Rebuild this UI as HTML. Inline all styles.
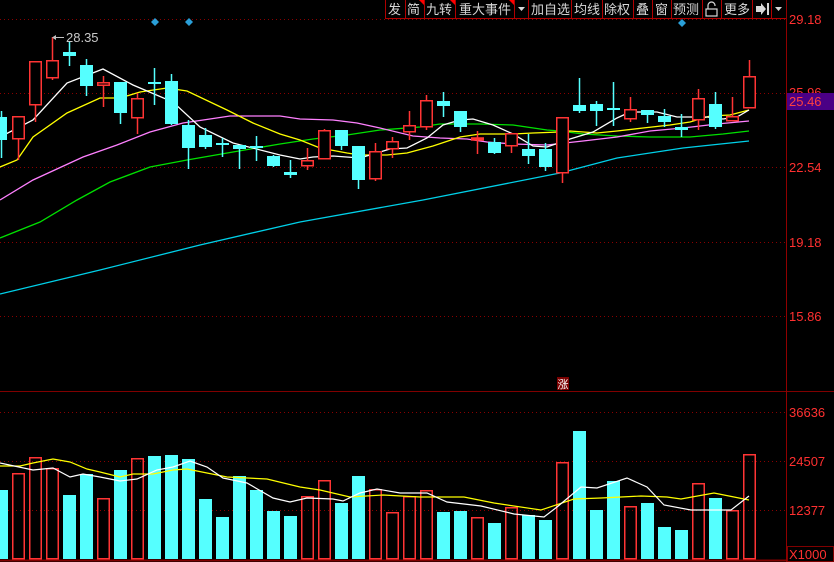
<!DOCTYPE html>
<html><head><meta charset="utf-8"><style>
html,body{margin:0;padding:0;background:#000;width:834px;height:562px;overflow:hidden}
svg{display:block}
text{font-family:"Liberation Sans","Noto Sans CJK SC",sans-serif}
</style></head><body>
<svg width="834" height="562" viewBox="0 0 834 562" xmlns="http://www.w3.org/2000/svg">
<rect width="834" height="562" fill="#000"/>
<!-- grid -->
<g stroke="#8a0000" stroke-width="1" stroke-dasharray="1,3">
<line x1="0" y1="19.5" x2="786" y2="19.5"/>
<line x1="0" y1="93.5" x2="786" y2="93.5"/>
<line x1="0" y1="167.5" x2="786" y2="167.5"/>
<line x1="0" y1="242.5" x2="786" y2="242.5"/>
<line x1="0" y1="316.5" x2="786" y2="316.5"/>
<line x1="0" y1="412.5" x2="786" y2="412.5"/>
<line x1="0" y1="461.5" x2="786" y2="461.5"/>
<line x1="0" y1="510.5" x2="786" y2="510.5"/>
</g>
<line x1="0" y1="391.5" x2="834" y2="391.5" stroke="#800000"/>
<line x1="0" y1="560.5" x2="786" y2="560.5" stroke="#800000" stroke-width="2"/>
<line x1="786.5" y1="0" x2="786.5" y2="562" stroke="#900000"/>

<!-- MA lines price -->
<g fill="none" stroke-width="1.3">
<polyline stroke="#00d0e8" points="0,294 100,270 200,245 300,222 423,200 560,173 617,158 683,148 749,141"/>
<polyline stroke="#00e000" points="0,238 40,222 77,200 110,182 150,167 187,160 233,152 280,144 313,139 347,135 380,130 420,127 440,124 480,124 513,125 547,130 560,131 583,134 617,136 650,137 690,137 723,134 749,131"/>
<polyline stroke="#ff80ff" points="0,200 33,180 83,157 117,145 150,132 183,123 230,116 280,116 300,119 333,120 357,123 380,128 413,136 440,138 467,139 487,142 513,144 547,145 583,141 617,137 650,131 683,128 717,124 749,121"/>
<polyline stroke="#ffff00" points="0,167 17,160 33,137 67,113 100,98 120,98 140,92 167,88 187,91 227,110 253,123 280,134 300,140 320,148 347,153 360,155 387,155 407,153 433,146 460,137 480,134 513,134 533,133 560,132 570,131 597,133 617,131 643,128 670,125 690,122 710,116 730,115 749,110"/>
<polyline stroke="#ffffff" points="0,137 33,120 67,83 103,69 133,85 173,102 200,127 233,143 280,155 300,159 313,157 333,156 360,158 390,149 407,148 427,138 443,125 460,120 473,119 493,125 513,134 533,146 547,147 570,139 593,132 617,118 630,112 657,112 677,117 707,117 723,119 737,117 749,110"/>
</g>

<!-- candles -->
<g stroke-width="1.5">
<g stroke="#55ffff" fill="#55ffff">
<line x1="1.5" y1="111" x2="1.5" y2="158"/><rect x="-5" y="117" width="12" height="23" stroke="none"/>
<line x1="69.5" y1="42" x2="69.5" y2="66"/><rect x="63" y="52" width="13" height="4" stroke="none"/>
<line x1="86.5" y1="59" x2="86.5" y2="96"/><rect x="80" y="65" width="13" height="21" stroke="none"/>
<line x1="120.5" y1="82" x2="120.5" y2="124"/><rect x="114" y="82" width="13" height="31" stroke="none"/>
<line x1="154.5" y1="68" x2="154.5" y2="105"/><rect x="148" y="82" width="13" height="2" stroke="none"/>
<line x1="171.5" y1="74" x2="171.5" y2="125"/><rect x="165" y="81" width="13" height="43" stroke="none"/>
<line x1="188.5" y1="120" x2="188.5" y2="169"/><rect x="182" y="125" width="13" height="23" stroke="none"/>
<line x1="205.5" y1="128" x2="205.5" y2="149"/><rect x="199" y="135" width="13" height="12" stroke="none"/>
<line x1="222.5" y1="138" x2="222.5" y2="157"/><rect x="216" y="143" width="13" height="2" stroke="none"/>
<line x1="239.5" y1="145" x2="239.5" y2="169"/><rect x="233" y="145" width="13" height="4" stroke="none"/>
<line x1="256.5" y1="136" x2="256.5" y2="161"/><rect x="250" y="146" width="13" height="2" stroke="none"/>
<line x1="273.5" y1="155" x2="273.5" y2="167"/><rect x="267" y="156" width="13" height="10" stroke="none"/>
<line x1="290.5" y1="160" x2="290.5" y2="178"/><rect x="284" y="172" width="13" height="3" stroke="none"/>
<line x1="341.5" y1="130" x2="341.5" y2="150"/><rect x="335" y="130" width="13" height="16" stroke="none"/>
<line x1="358.5" y1="146" x2="358.5" y2="189"/><rect x="352" y="146" width="13" height="34" stroke="none"/>
<line x1="443.5" y1="92" x2="443.5" y2="117"/><rect x="437" y="101" width="13" height="5" stroke="none"/>
<line x1="460.5" y1="111" x2="460.5" y2="132"/><rect x="454" y="111" width="13" height="16" stroke="none"/>
<line x1="494.5" y1="138" x2="494.5" y2="154"/><rect x="488" y="142" width="13" height="11" stroke="none"/>
<line x1="528.5" y1="134" x2="528.5" y2="164"/><rect x="522" y="149" width="13" height="7" stroke="none"/>
<line x1="545.5" y1="143" x2="545.5" y2="171"/><rect x="539" y="149" width="13" height="18" stroke="none"/>
<line x1="579.5" y1="78" x2="579.5" y2="113"/><rect x="573" y="105" width="13" height="6" stroke="none"/>
<line x1="596.5" y1="101" x2="596.5" y2="126"/><rect x="590" y="104" width="13" height="7" stroke="none"/>
<line x1="613.5" y1="82" x2="613.5" y2="126"/><rect x="607" y="108" width="13" height="2" stroke="none"/>
<line x1="647.5" y1="110" x2="647.5" y2="123"/><rect x="641" y="110" width="13" height="5" stroke="none"/>
<line x1="664.5" y1="109" x2="664.5" y2="127"/><rect x="658" y="116" width="13" height="6" stroke="none"/>
<line x1="681.5" y1="114" x2="681.5" y2="137"/><rect x="675" y="127" width="13" height="3" stroke="none"/>
<line x1="715.5" y1="92" x2="715.5" y2="129"/><rect x="709" y="104" width="13" height="23" stroke="none"/>
</g>
<g stroke="#ff3434" fill="#000">
<line x1="18.5" y1="116" x2="18.5" y2="160"/><rect x="12.75" y="116.75" width="11.5" height="22"/>
<line x1="35.5" y1="61" x2="35.5" y2="122"/><rect x="29.75" y="61.75" width="11.5" height="43"/>
<line x1="52.5" y1="37" x2="52.5" y2="80"/><rect x="46.75" y="60.75" width="11.5" height="17"/>
<line x1="103.5" y1="76" x2="103.5" y2="107"/><rect x="97.75" y="82.75" width="11.5" height="2.5"/>
<line x1="137.5" y1="93" x2="137.5" y2="134"/><rect x="131.75" y="98.75" width="11.5" height="19"/>
<line x1="307.5" y1="148" x2="307.5" y2="170"/><rect x="301.75" y="160.75" width="11.5" height="5"/>
<line x1="324.5" y1="129" x2="324.5" y2="159"/><rect x="318.75" y="130.75" width="11.5" height="28"/>
<line x1="375.5" y1="143" x2="375.5" y2="181"/><rect x="369.75" y="151.75" width="11.5" height="27"/>
<line x1="392.5" y1="137" x2="392.5" y2="158"/><rect x="386.75" y="141.75" width="11.5" height="7"/>
<line x1="409.5" y1="111" x2="409.5" y2="140"/><rect x="403.75" y="125.75" width="11.5" height="6"/>
<line x1="426.5" y1="95" x2="426.5" y2="130"/><rect x="420.75" y="100.75" width="11.5" height="26"/>
<line x1="477.5" y1="131" x2="477.5" y2="154"/><rect x="471.75" y="138" width="11.5" height="2" fill="#ff3434"/>
<line x1="511.5" y1="133" x2="511.5" y2="153"/><rect x="505.75" y="133.75" width="11.5" height="12"/>
<line x1="562.5" y1="117" x2="562.5" y2="183"/><rect x="556.75" y="117.75" width="11.5" height="55"/>
<line x1="630.5" y1="97" x2="630.5" y2="122"/><rect x="624.75" y="109.75" width="11.5" height="9"/>
<line x1="698.5" y1="89" x2="698.5" y2="130"/><rect x="692.75" y="98.75" width="11.5" height="21"/>
<line x1="732.5" y1="97" x2="732.5" y2="121"/><rect x="726.75" y="116.75" width="11.5" height="4"/>
<line x1="749.5" y1="60" x2="749.5" y2="108"/><rect x="743.75" y="76.75" width="11.5" height="31"/>
</g>
</g>

<!-- 28.35 -->
<line x1="55" y1="37.5" x2="64" y2="37.5" stroke="#c0c0c0"/>
<path d="M52,37.5 L56,35 L56,40 Z" fill="#c0c0c0"/>
<text x="66" y="42" font-size="13" fill="#c8c8c8">28.35</text>

<!-- diamonds -->
<g fill="#2a9fd8">
<path d="M155,18 L159,22 L155,26 L151,22Z"/>
<path d="M189,18 L193,22 L189,26 L185,22Z"/>
<path d="M682,19 L686,23 L682,27 L678,23Z"/>
</g>

<!-- toolbar -->
<g>
<rect x="385" y="0" width="401" height="19" fill="#000"/>
<line x1="385" y1="18.5" x2="786" y2="18.5" stroke="#b00000"/>
<g stroke="#b00000">
<line x1="385.5" y1="0" x2="385.5" y2="19"/>
<line x1="405.5" y1="0" x2="405.5" y2="19"/>
<line x1="424.5" y1="0" x2="424.5" y2="19"/>
<line x1="455.5" y1="0" x2="455.5" y2="19"/>
<line x1="514.5" y1="0" x2="514.5" y2="19"/>
<line x1="528.5" y1="0" x2="528.5" y2="19"/>
<line x1="571.5" y1="0" x2="571.5" y2="19"/>
<line x1="602.5" y1="0" x2="602.5" y2="19"/>
<line x1="633.5" y1="0" x2="633.5" y2="19"/>
<line x1="652.5" y1="0" x2="652.5" y2="19"/>
<line x1="671.5" y1="0" x2="671.5" y2="19"/>
<line x1="702.5" y1="0" x2="702.5" y2="19"/>
<line x1="721.5" y1="0" x2="721.5" y2="19"/>
<line x1="752.5" y1="0" x2="752.5" y2="19"/>
<line x1="771.5" y1="0" x2="771.5" y2="19"/>
</g>
<g fill="#ff0000">
<path d="M419,0 L424,0 L424,5Z"/>
<path d="M450,0 L455,0 L455,5Z"/>
<path d="M509,0 L514,0 L514,5Z"/>
</g>
<g font-size="13" fill="#d8d8d8">
<text x="388" y="14">发</text>
<text x="407" y="14">简</text>
<text x="426" y="14">九转</text>
<text x="459" y="14">重大事件</text>
<text x="531" y="14">加自选</text>
<text x="574" y="14">均线</text>
<text x="604" y="14">除权</text>
<text x="636" y="14">叠</text>
<text x="655" y="14">窗</text>
<text x="673" y="14">预测</text>
<text x="724" y="14">更多</text>
</g>
<path d="M518,7 L525,7 L521.5,11Z" fill="#d8d8d8"/>
<path d="M775,7 L782,7 L778.5,11Z" fill="#d8d8d8"/>
<rect x="706" y="9" width="11" height="7" fill="none" stroke="#d8d8d8" stroke-width="1.2"/>
<path d="M708,9 V5.5 A3.5,3.5 0 0 1 715,5.5 V6" fill="none" stroke="#d8d8d8" stroke-width="1.2"/>
<path d="M756,6 H761 V3 L766,9 L761,15 V12 H756Z" fill="#d8d8d8"/>
<rect x="767" y="3" width="2" height="12" fill="#d8d8d8"/>
</g>

<!-- right axis labels -->
<g font-size="13" fill="#ff3030">
<text x="789" y="24">29.18</text>
<text x="789" y="97">25.96</text>
<text x="789" y="172">22.54</text>
<text x="789" y="247">19.18</text>
<text x="789" y="321">15.86</text>
<text x="789" y="417">36636</text>
<text x="789" y="466">24507</text>
<text x="789" y="515">12377</text>
</g>
<rect x="787" y="93" width="47" height="17" fill="#4a0085"/>
<text x="789" y="106" font-size="13" fill="#ff4040">25.46</text>
<rect x="787.5" y="546.5" width="46" height="15" fill="#000" stroke="#800000"/>
<text x="789" y="559" font-size="13" fill="#ff3030">X1000</text>

<!-- 涨 -->
<rect x="557" y="377" width="12" height="13" fill="#7a0000"/>
<text x="557.5" y="388" font-size="11" fill="#ffffff">涨</text>

<!-- volume bars -->
<g fill="#55ffff">
<rect x="-5" y="490" width="13" height="69"/>
<rect x="63" y="495" width="13" height="64"/>
<rect x="80" y="474" width="13" height="85"/>
<rect x="114" y="470" width="13" height="89"/>
<rect x="148" y="456" width="13" height="103"/>
<rect x="165" y="455" width="13" height="104"/>
<rect x="182" y="459" width="13" height="100"/>
<rect x="199" y="499" width="13" height="60"/>
<rect x="216" y="517" width="13" height="42"/>
<rect x="233" y="476" width="13" height="83"/>
<rect x="250" y="490" width="13" height="69"/>
<rect x="267" y="511" width="13" height="48"/>
<rect x="284" y="516" width="13" height="43"/>
<rect x="335" y="503" width="13" height="56"/>
<rect x="352" y="476" width="13" height="83"/>
<rect x="437" y="512" width="13" height="47"/>
<rect x="454" y="511" width="13" height="48"/>
<rect x="488" y="523" width="13" height="36"/>
<rect x="522" y="515" width="13" height="44"/>
<rect x="539" y="520" width="13" height="39"/>
<rect x="573" y="431" width="13" height="128"/>
<rect x="590" y="510" width="13" height="49"/>
<rect x="607" y="481" width="13" height="78"/>
<rect x="641" y="503" width="13" height="56"/>
<rect x="658" y="527" width="13" height="32"/>
<rect x="675" y="530" width="13" height="29"/>
<rect x="709" y="498" width="13" height="61"/>
</g>
<g fill="none" stroke="#ff3434" stroke-width="1.5">
<rect x="12.75" y="473.75" width="11.5" height="85"/>
<rect x="29.75" y="457.75" width="11.5" height="101"/>
<rect x="46.75" y="468.75" width="11.5" height="90"/>
<rect x="97.75" y="498.75" width="11.5" height="60"/>
<rect x="131.75" y="458.75" width="11.5" height="100"/>
<rect x="301.75" y="496.75" width="11.5" height="62"/>
<rect x="318.75" y="480.75" width="11.5" height="78"/>
<rect x="369.75" y="489.75" width="11.5" height="69"/>
<rect x="386.75" y="512.75" width="11.5" height="46"/>
<rect x="403.75" y="496.75" width="11.5" height="62"/>
<rect x="420.75" y="490.75" width="11.5" height="68"/>
<rect x="471.75" y="517.75" width="11.5" height="41"/>
<rect x="505.75" y="507.75" width="11.5" height="51"/>
<rect x="556.75" y="462.75" width="11.5" height="96"/>
<rect x="624.75" y="506.75" width="11.5" height="52"/>
<rect x="692.75" y="483.75" width="11.5" height="75"/>
<rect x="726.75" y="510.75" width="11.5" height="48"/>
<rect x="743.75" y="454.75" width="11.5" height="104"/>
</g>
<!-- volume MAs -->
<g fill="none" stroke-width="1.2">
<polyline stroke="#ffff00" points="0,466 20,466 33,463 53,459 70,462 87,469 100,472 120,477 133,474 153,474 173,470 187,469 227,477 267,479 300,487 320,490 350,497 383,495 420,497 464,497 494,503 541,510 574,499 601,498 641,496 667,497 681,499 714,493 734,497 749,500"/>
<polyline stroke="#ffffff" points="0,463 33,470 53,468 70,477 83,474 100,477 120,481 137,479 157,470 173,467 190,461 207,467 223,478 247,483 273,498 290,502 307,498 333,499 343,501 360,493 377,489 400,493 427,493 447,502 481,506 514,514 544,517 557,507 581,487 597,488 627,478 647,487 664,505 691,510 731,510 749,496"/>
</g>
</svg>
</body></html>
